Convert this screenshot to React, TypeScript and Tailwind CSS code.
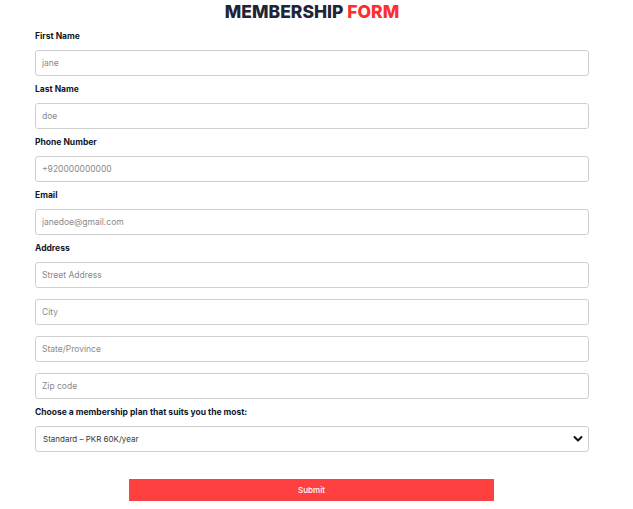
import { ChangeEvent, useState } from 'react';

const font = { fontFamily: 'Inter, "Open Sans", sans-serif' };

type Field = { label?: string; name: string; placeholder: string };

const fields: Field[] = [
  { label: 'First Name', name: 'firstName', placeholder: 'jane' },
  { label: 'Last Name', name: 'lastName', placeholder: 'doe' },
  { label: 'Phone Number', name: 'phone', placeholder: '+920000000000' },
  { label: 'Email', name: 'email', placeholder: 'janedoe@gmail.com' },
];

const addressFields: Field[] = [
  { name: 'street', placeholder: 'Street Address' },
  { name: 'city', placeholder: 'City' },
  { name: 'state', placeholder: 'State/Province' },
  { name: 'zip', placeholder: 'Zip code' },
];

const inputClass =
  'block w-full h-[26px] rounded-[3px] border border-[#cfcfcf] bg-white px-[6px] text-[8.5px] text-[#333] placeholder:text-[#8a8a8a] outline-none';

const labelClass =
  'block h-[12px] mb-[8px] text-[8.5px] leading-[12px] font-bold text-[#0f172a]';

export default function App() {
  const [values, setValues] = useState<Record<string, string>>({});
  const [plan, setPlan] = useState('standard');

  const onChange = (e: ChangeEvent<HTMLInputElement>) =>
    setValues({ ...values, [e.target.name]: e.target.value });

  return (
    <div className="min-h-[509px] bg-white" style={font}>
      <form className="ml-[35px] w-[554px]" onSubmit={(e) => e.preventDefault()}>
        <h1 className="h-[24px] mb-[6px] text-center text-[17.5px] leading-[24px] font-extrabold text-[#1e2535]">
          MEMBERSHIP <span className="text-[#ff2e2e]">FORM</span>
        </h1>

        {fields.map((f) => (
          <div key={f.name} className="mb-[7px]">
            <label className={labelClass}>{f.label}</label>
            <input
              name={f.name}
              placeholder={f.placeholder}
              value={values[f.name] ?? ''}
              onChange={onChange}
              className={inputClass}
            />
          </div>
        ))}

        {/* Address */}
        <label className={labelClass}>Address</label>
        <div className="flex flex-col gap-[11px] mb-[7px]">
          {addressFields.map((f) => (
            <input
              key={f.name}
              name={f.name}
              placeholder={f.placeholder}
              value={values[f.name] ?? ''}
              onChange={onChange}
              className={inputClass}
            />
          ))}
        </div>

        <label className={labelClass}>Choose a membership plan that suits you the most:</label>
        <div className="relative">
          <select
            value={plan}
            onChange={(e) => setPlan(e.target.value)}
            className="block w-full h-[26px] appearance-none rounded-[3px] border border-[#cfcfcf] bg-white pl-[7px] text-[8px] text-[#3a3a3a] outline-none"
          >
            <option value="standard">Standard – PKR 60K/year</option>
            <option value="premium">Premium – PKR 100K/year</option>
          </select>
          <svg
            className="pointer-events-none absolute right-[6px] top-[9px]"
            width="10"
            height="8"
            viewBox="0 0 10 8"
            fill="none"
          >
            <path d="M1.5 2 L5 5.5 L8.5 2" stroke="#111" strokeWidth="2" strokeLinecap="round" strokeLinejoin="round" />
          </svg>
        </div>

        <div className="flex justify-center mt-[27px]">
          <button
            type="submit"
            className="w-[365px] h-[22px] -ml-[1px] bg-[#ff4040] text-[8px] leading-[20px] font-medium text-white"
          >
            Submit
          </button>
        </div>
      </form>
    </div>
  );
}
